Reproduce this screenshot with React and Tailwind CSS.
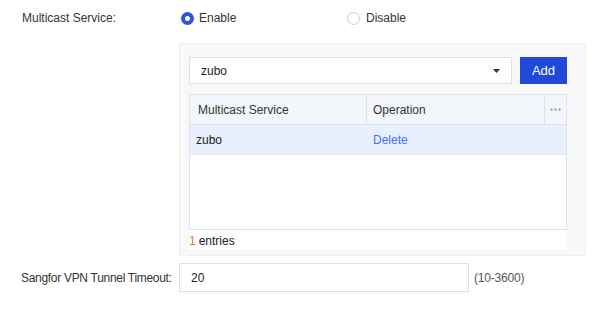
export default function App() {
  return (
    <div
      className="w-[615px] h-[312px] bg-white text-[12px] text-[#333]"
      style={{ fontFamily: '"Liberation Sans", "Noto Sans", sans-serif' }}
    >
      {/* Multicast service row */}
      <div className="flex items-center h-[36px]">
        <div className="w-[181px] shrink-0 pl-[22px]">Multicast Service:</div>
        <label className="flex items-center w-[166px]">
          <span className="w-[13px] h-[13px] rounded-full border-[4px] border-[#2f55d4] bg-white" />
          <span className="ml-[5px]">Enable</span>
        </label>
        <label className="flex items-center">
          <span className="w-[13px] h-[13px] rounded-full border border-[#c9ccd2] bg-white" />
          <span className="ml-[6px]">Disable</span>
        </label>
      </div>

      {/* Panel */}
      <div className="ml-[179px] mt-[7px] w-[407px] h-[213px] bg-[#f8f8f8] border border-[#eeeeee] pl-[9px] pr-[18px] pt-[13px]">
        <div className="flex items-center gap-[8px]">
          <div className="w-[323px] h-[27px] bg-white border border-[#dcdfe5] flex items-center justify-between pl-[11px] pr-[11px]">
            <span className="text-[#222]">zubo</span>
            <svg width="7" height="4" viewBox="0 0 7 4">
              <path d="M0 0 L7 0 L3.5 4 Z" fill="#333" />
            </svg>
          </div>
          <button className="w-[47px] h-[27px] bg-[#2149d8] text-white text-[13px]">Add</button>
        </div>

        <div className="mt-[10px] w-[378px] bg-white border border-[#dde2ec]">
          <div className="flex h-[30px] bg-[#f3f6fa] border-b border-[#dde2ec]">
            <div className="w-[177px] border-r border-[#dde2ec] flex items-center pl-[8px] text-[#333]">
              Multicast Service
            </div>
            <div className="w-[178px] border-r border-[#dde2ec] flex items-center pl-[6px] text-[#333]">
              Operation
            </div>
            <div className="flex-1 flex items-center justify-center">
              <svg width="11" height="3" viewBox="0 0 11 3">
                <circle cx="1.5" cy="1.5" r="1.2" fill="#a3a8b2" />
                <circle cx="5.5" cy="1.5" r="1.2" fill="#a3a8b2" />
                <circle cx="9.5" cy="1.5" r="1.2" fill="#a3a8b2" />
              </svg>
            </div>
          </div>
          <div className="flex h-[30px] bg-[#e8effe] border-b border-[#dde2ec]">
            <div className="w-[177px] flex items-center pl-[6px] text-[#222]">zubo</div>
            <div className="flex items-center pl-[6px] text-[#4a6cf2]">Delete</div>
          </div>
          <div className="h-[74px]" />
        </div>
        <div className="w-[378px] h-[20px] bg-white flex items-center pt-[1px]">
          <span className="text-[#f0720c]">1</span>
          <span className="ml-[3px] text-[#222]">entries</span>
        </div>
      </div>

      {/* Timeout row */}
      <div className="flex items-center mt-[7px] h-[29px]">
        <div className="w-[179px] shrink-0 pl-[21px] whitespace-nowrap tracking-[-0.3px]">
          Sangfor VPN Tunnel Timeout:
        </div>
        <div className="w-[290px] shrink-0 h-[29px] bg-white border border-[#dcdfe5] flex items-center pl-[11px] text-[#222]">
          20
        </div>
        <span className="ml-[5px] text-[#555] tracking-[-0.2px]">(10-3600)</span>
      </div>
    </div>
  );
}
